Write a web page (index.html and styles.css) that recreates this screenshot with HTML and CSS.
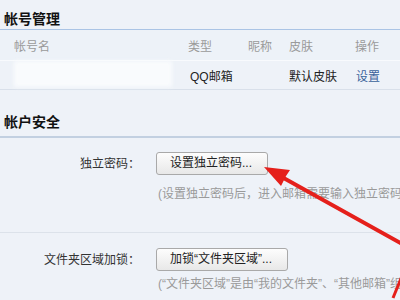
FILE: index.html
```html
<!DOCTYPE html>
<html lang="zh-CN">
<head>
<meta charset="utf-8">
<link rel="stylesheet" href="styles.css">
</head>
<body>
<div class="page">
  <h2 class="title title-first">帐号管理</h2>
  <div class="table">
    <div class="trow thead">
      <div class="c1">帐号名</div>
      <div class="c2">类型</div>
      <div class="c3">昵称</div>
      <div class="c4">皮肤</div>
      <div class="c5">操作</div>
    </div>
    <div class="trow tbody">
      <div class="c1"><div class="blur"></div></div>
      <div class="c2 qq">QQ邮箱</div>
      <div class="c3"></div>
      <div class="c4">默认皮肤</div>
      <div class="c5 link">设置</div>
    </div>
  </div>

  <h2 class="title title-second">帐户安全</h2>
  <div class="form">
    <div class="frow frow-first">
      <div class="label">独立密码：</div>
      <div class="field">
        <button class="btn">设置独立密码...</button>
        <div class="hint hint-first">(设置独立密码后，进入邮箱需要输入独立密码)</div>
      </div>
    </div>
    <div class="sep"></div>
    <div class="frow frow-second">
      <div class="label">文件夹区域加锁：</div>
      <div class="field">
        <button class="btn">加锁“文件夹区域”...</button>
        <div class="hint hint-second">(“文件夹区域”是由“我的文件夹”、“其他邮箱”组成)</div>
      </div>
    </div>
  </div>

  <svg class="arrow" width="400" height="300" viewBox="0 0 400 300">
    <line x1="280" y1="176" x2="404" y2="245" stroke="#e5201b" stroke-width="4" stroke-linecap="round"/>
    <polygon points="264,167 290,170 286,176 281,186" fill="#e5201b"/>
    <line x1="393" y1="298" x2="402" y2="276" stroke="#e5201b" stroke-width="3"/>
  </svg>
</div>
</body>
</html>
```
FILE: styles.css
```css
html, body {
  margin: 0;
  padding: 0;
}
body {
  background: #eef2f8;
  font-family: "Liberation Sans", "Noto Sans CJK SC", sans-serif;
  font-size: 12px;
  color: #333;
  width: 400px;
  height: 300px;
  overflow: hidden;
}
.page {
  position: relative;
  width: 400px;
  height: 300px;
  overflow: hidden;
}
.title {
  margin: 0;
  padding-left: 4px;
  font-size: 14px;
  font-weight: bold;
  line-height: 20px;
  color: #111;
}
.title-first {
  padding-top: 9px;
}
.title-second {
  padding-top: 22px;
  padding-bottom: 4px;
  border-bottom: 2px solid #c2d0e1;
}
.table {
  border-top: 1px solid #aac4e5;
}
.trow {
  display: grid;
  grid-template-columns: 188px 60px 41px 66px 1fr;
  align-items: center;
}
.trow > div:first-child {
  padding-left: 14px;
}
.thead {
  height: 30px;
  color: #9a9a9a;
  background: #edf2f8;
  border-bottom: 1px solid #f8fafd;
}
.tbody {
  height: 28px;
  border-bottom: 1px solid #d9e0ea;
  color: #222;
}
.tbody > .c1 {
  padding-left: 7px;
  height: 28px;
}
.blur {
  width: 158px;
  height: 26px;
  background: #f9fbfd;
  filter: blur(2px);
}
.qq {
  padding-left: 2px;
}
.link {
  color: #3a639b;
  padding-left: 1px;
}
.form {
  padding-top: 14px;
}
.frow {
  display: grid;
  grid-template-columns: 140px 244px;
  column-gap: 16px;
}
.field {
  min-width: 0;
}
.label {
  text-align: right;
  height: 23px;
  line-height: 25px;
  color: #333;
}
.btn {
  display: block;
  height: 23px;
  padding: 0 15px 0 13px;
  border: 1px solid #a9a9a9;
  border-radius: 3px;
  background: linear-gradient(#fdfdfd, #e8e8e8);
  font-family: "Liberation Sans", "Noto Sans CJK SC", sans-serif;
  font-size: 12px;
  color: #222;
  line-height: 21px;
}
.hint {
  padding-left: 2px;
  color: #9a9a9a;
  line-height: 18px;
  white-space: nowrap;
  overflow: hidden;
}
.hint-first {
  margin-top: 10px;
}
.hint-second {
  margin-top: 4px;
}
.sep {
  margin-top: 29px;
  border-top: 1px solid #dce2ea;
}
.frow-second {
  padding-top: 15px;
}
.arrow {
  position: absolute;
  left: 0;
  top: 0;
  pointer-events: none;
}
```
